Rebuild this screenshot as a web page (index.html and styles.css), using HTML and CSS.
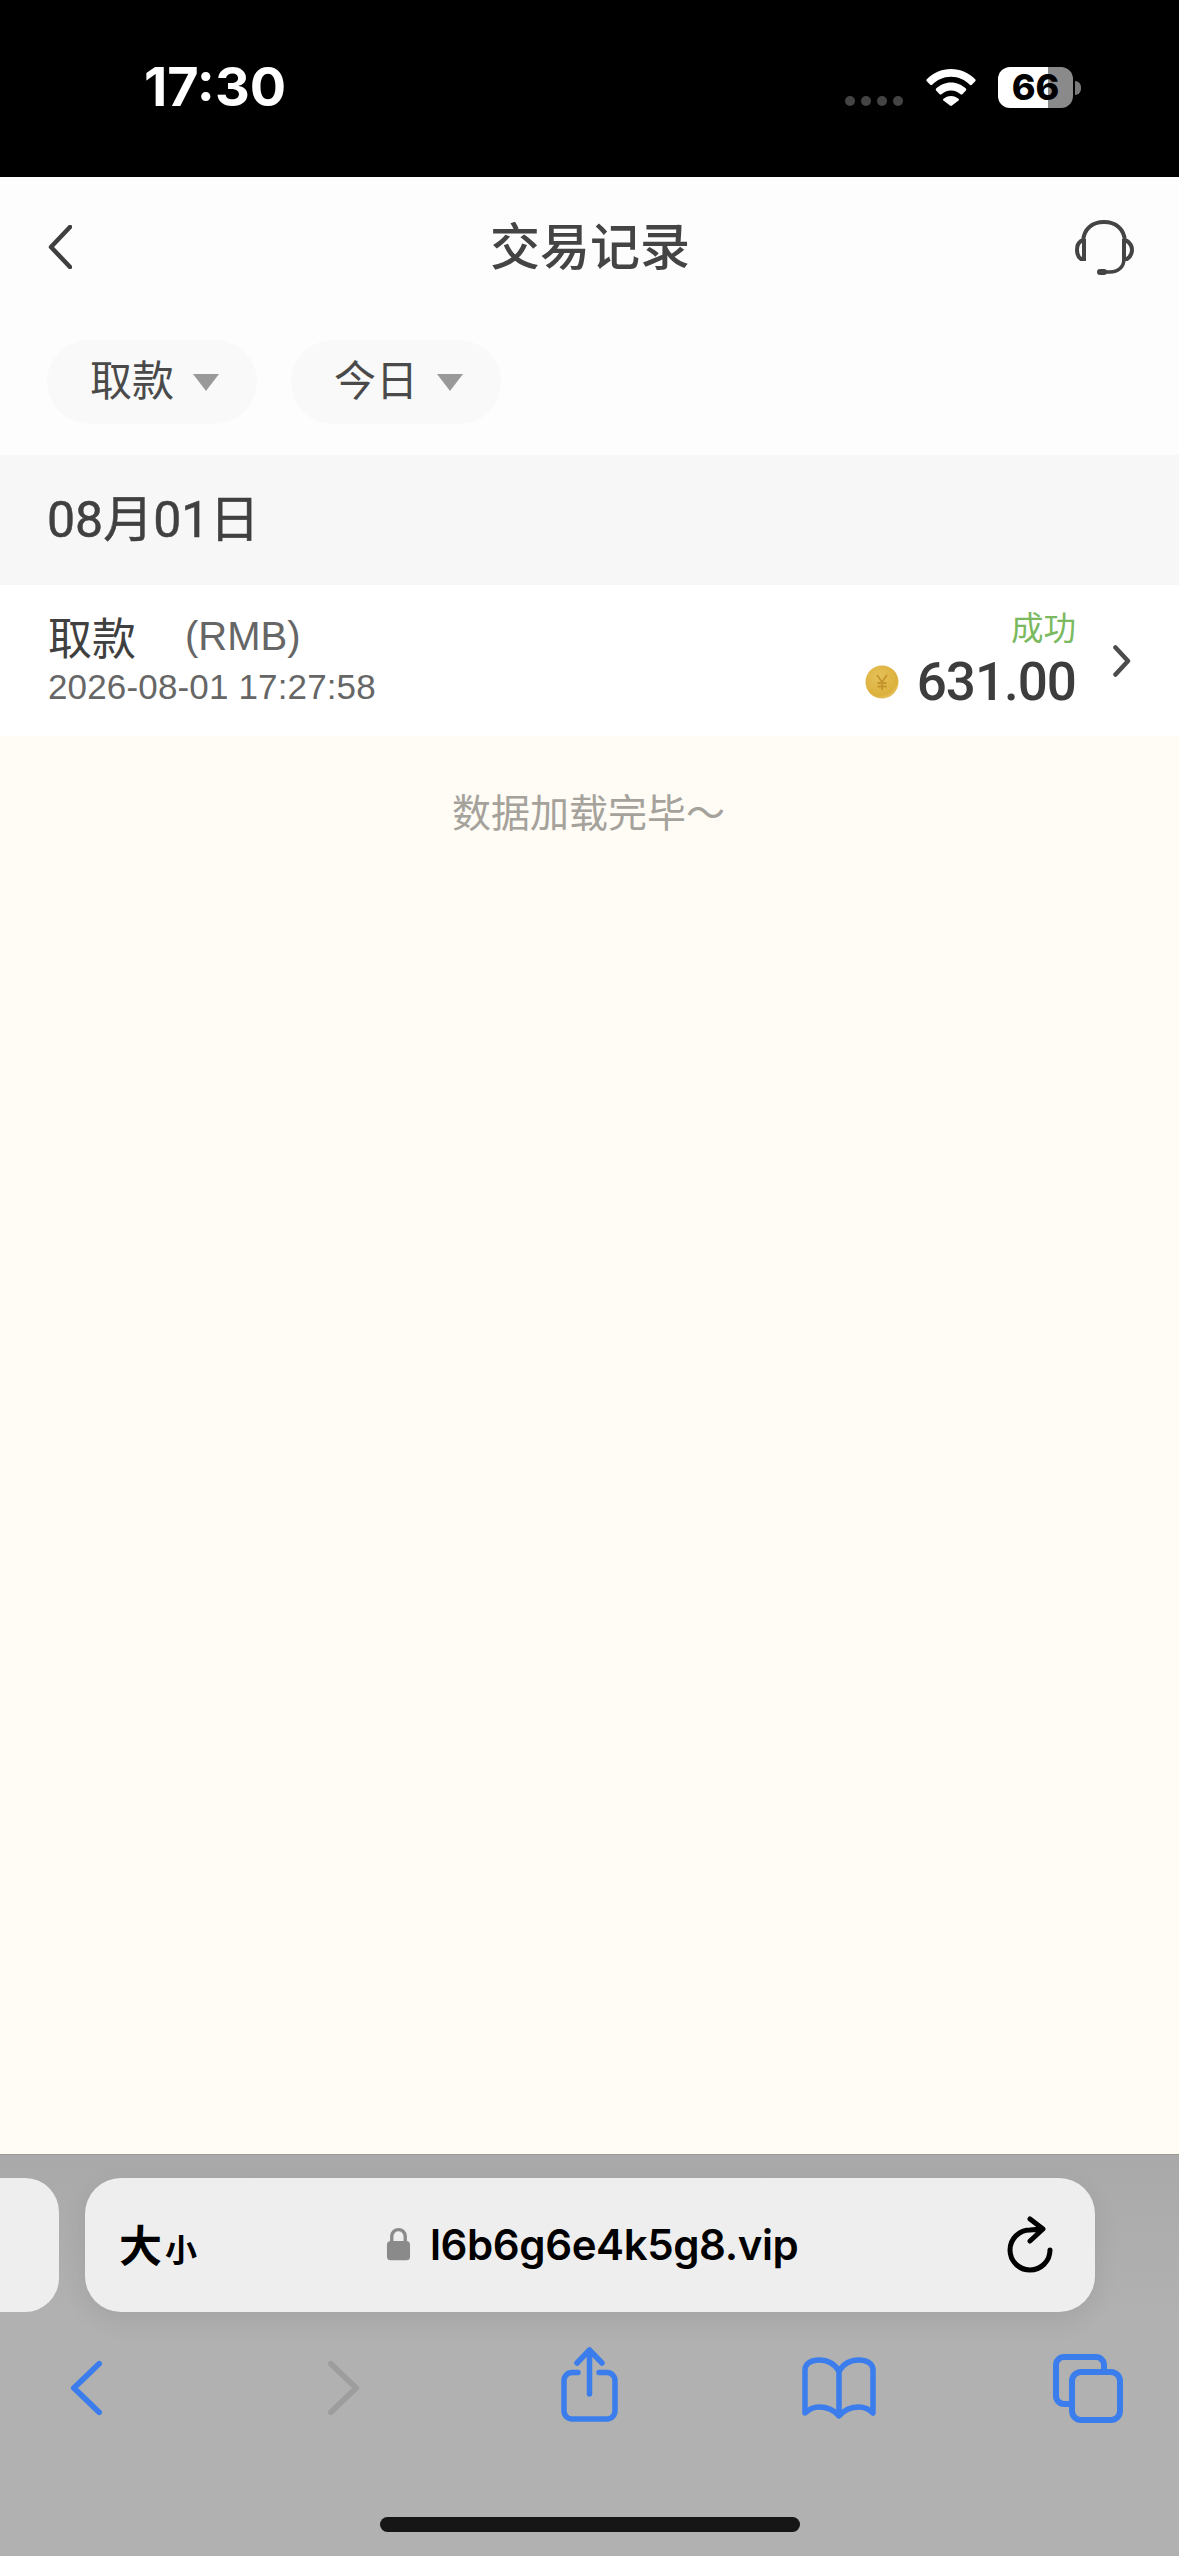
FILE: index.html
```html
<!DOCTYPE html>
<html lang="zh">
<head>
<meta charset="utf-8">
<title>交易记录</title>
<link rel="stylesheet" href="styles.css">
</head>
<body>
<div class="phone">
  <div class="status">
    <span class="time">17:30</span>
    <div class="status-right">
      <div class="dots"><i></i><i></i><i></i><i></i></div>
      <svg class="wifi" viewBox="0 0 50 37"><path d="M25 0C15.500 0 7 3.800 .8 10.200c-.6.600-.6 1.400 0 2l3.400 3.600c.6.600 1.400.6 2 0C11 10.800 17.600 7.800 25 7.800s14 3 18.800 8c.6.600 1.400.6 2 0l3.400-3.600c.6-.6.6-1.400 0-2C43 3.800 34.500 0 25 0zM25 13.400c-5.800 0-11.100 2.400-14.900 6.200-.5.600-.5 1.300 0 1.900l3.500 3.700c.6.600 1.300.5 1.900 0 2.500-2.300 5.800-3.700 9.500-3.700s7 1.400 9.500 3.700c.6.500 1.300.6 1.900 0l3.500-3.700c.5-.6.500-1.300 0-1.900C36.100 15.800 30.800 13.400 25 13.400zM25 27c-2.900 0-5.500 1.100-7.500 2.800-.6.500-.6 1.200-.1 1.800l6.600 5c.6.500 1.400.5 2 0l6.600-5c.5-.6.500-1.300-.1-1.800-2-1.700-4.600-2.800-7.500-2.800z" fill="#fff"/></svg>
      <div class="battery"><div class="battery-body"><span>66</span></div><i class="battery-nub"></i></div>
    </div>
  </div>

  <header class="nav">
    <svg class="nav-back" viewBox="0 0 24 44"><path d="M22 2 3 22l19 20" fill="none" stroke="#3f3f3f" stroke-width="4.500" stroke-linecap="round" stroke-linejoin="round"/></svg>
    <h1 class="nav-title">交易记录</h1>
    <svg class="nav-help" viewBox="0 0 60 56"><g fill="none" stroke="#444" stroke-width="4" stroke-linecap="round"><path d="M9 21C10 9 18 2 30 2s20 7 21 19"/><path d="M10 21H7c-3 2-4 5-4 9s1 7 4 9h3z"/><path d="M50 21h3c3 2 5 5 5 9s-2 7-5 9h-3z"/><path d="M50 39c0 8-6 13-14 13h-9" stroke-width="3.500"/></g><rect x="23" y="49" width="10" height="6" rx="3" fill="#444"/></svg>
  </header>

  <div class="filters">
    <button class="chip">取款<i class="caret"></i></button>
    <button class="chip">今日<i class="caret"></i></button>
  </div>

  <div class="date-head">08月01日</div>

  <div class="record">
    <div class="record-left">
      <div class="record-type"><span class="record-name">取款</span><span class="record-cur">(RMB)</span></div>
      <div class="record-time">2026-08-01 17:27:58</div>
    </div>
    <div class="record-right">
      <div class="record-state">成功</div>
      <div class="record-amount">
        <svg class="coin" viewBox="0 0 34 34"><defs><radialGradient id="g" cx=".4" cy=".35" r=".8"><stop offset="0" stop-color="#e6c25a"/><stop offset=".7" stop-color="#dcb03c"/><stop offset="1" stop-color="#f0d98a"/></radialGradient></defs><circle cx="17" cy="17" r="16.500" fill="url(#g)"/><path d="M12 10l5 7 5-7M17 17v8M12.500 18h9M12.500 21.500h9" fill="none" stroke="#c4932b" stroke-width="1.800"/></svg>
        <span class="amount">631.00</span>
      </div>
    </div>
    <svg class="record-arrow" viewBox="0 0 18 32"><path d="M2.500 2.500 15 16 2.500 29.500" fill="none" stroke="#4c4c4c" stroke-width="4.500" stroke-linecap="round" stroke-linejoin="round"/></svg>
  </div>

  <main class="content"><p class="end-note">数据加载完毕～</p></main>

  <div class="browser">
    <div class="tabs-row">
      <div class="peek"></div>
      <div class="urlbar">
        <span class="aa"><b>大</b><small>小</small></span>
        <div class="url">
          <svg class="lock" viewBox="0 0 26 34"><path d="M6 15V9a7 7 0 0 1 14 0v6" fill="none" stroke="#8a8a8a" stroke-width="3.500"/><rect x="1" y="14" width="24" height="20" rx="4" fill="#8a8a8a"/></svg>
          <span class="url-text">l6b6g6e4k5g8.vip</span>
        </div>
        <svg class="reload" viewBox="0 0 60 65"><path d="M49 38A20 20 0 1 1 29 18L41 17M29 7 42 17 29 29" fill="none" stroke="#000" stroke-width="5" stroke-linecap="round" stroke-linejoin="round"/></svg>
      </div>
    </div>
    <nav class="tools">
      <svg class="tool tool-back" viewBox="0 0 34 56"><path d="M30 3 4 28l26 25" fill="none" stroke="#3b7ded" stroke-width="6" stroke-linecap="round" stroke-linejoin="round"/></svg>
      <svg class="tool tool-fwd" viewBox="0 0 34 56"><path d="M4 3l26 25L4 53" fill="none" stroke="#9d9d9d" stroke-width="6" stroke-linecap="round" stroke-linejoin="round"/></svg>
      <svg class="tool tool-share" viewBox="0 0 60 76"><g fill="none" stroke="#3b7ded" stroke-width="5.500" stroke-linecap="round" stroke-linejoin="round"><path d="M18 25.500H12a8 8 0 0 0-8 8V64a8 8 0 0 0 8 8h35a8 8 0 0 0 8-8V33.500a8 8 0 0 0-8-8h-8"/><path d="M29.500 47V3M17 16 29.500 3 42 16"/></g></svg>
      <svg class="tool tool-book" viewBox="0 0 74 62"><g fill="none" stroke="#3b7ded" stroke-width="5.500" stroke-linejoin="round" stroke-linecap="round"><path d="M37 14C32 6 24 3 17 3 10 3 3 6 3 13v43c4-4 9-6 14-6 8 0 15 3 20 9 5-6 12-9 20-9 5 0 10 2 14 6V13c0-7-7-10-14-10-7 0-15 3-20 11z"/><path d="M37 14v44"/></g></svg>
      <svg class="tool tool-tabs" viewBox="0 0 72 72"><g fill="none" stroke="#3b7ded" stroke-width="6" stroke-linejoin="round"><path d="M52 17v-5a8 8 0 0 0-8-8H12a8 8 0 0 0-8 8v31a8 8 0 0 0 8 8h6"/><rect x="20" y="19" width="48" height="48" rx="9"/></g></svg>
    </nav>
    <div class="home"></div>
  </div>
</div>
</body>
</html>
```
FILE: styles.css
```css
* { box-sizing: border-box; margin: 0; padding: 0; }
html, body { width: 1179px; height: 2556px; overflow: hidden; }
body { font-family: "Inter", "Noto Sans CJK SC", sans-serif; background: #000; }
.phone { width: 1179px; height: 2556px; display: flex; flex-direction: column; }

.status { height: 177px; flex: none; background: #000; color: #fff; display: flex; justify-content: space-between; padding: 58px 98px 0 144px; }
.time { font: 700 54px/58px "Inter", sans-serif; letter-spacing: 0; }
.status-right { display: flex; align-items: flex-start; }
.dots { display: flex; gap: 6px; margin: 38px 23px 0 0; }
.dots i { width: 10px; height: 10px; border-radius: 50%; background: #444; }
.wifi { width: 50px; height: 37px; margin: 11px 22px 0 0; }
.battery { display: flex; align-items: center; margin-top: 9px; }
.battery-body { width: 75px; height: 41px; border-radius: 12px; background: linear-gradient(90deg, #fff 0 50px, #8a8a8a 50px); display: flex; align-items: center; justify-content: center; }
.battery-body span { font: 800 36px/41px "Inter", sans-serif; color: #000; }
.battery-nub { width: 6px; height: 14px; margin-left: 2px; border-radius: 0 7px 7px 0; background: #7a7a7a; }

.nav { height: 144px; flex: none; background: #fdfdfd; display: grid; grid-template-columns: 1fr auto 1fr; align-items: center; padding: 0 45px 0 46px; }
.nav-back { width: 24px; height: 44px; margin: 0 0 4px 2px; justify-self: start; }
.nav-title { font: 500 50px/60px "Noto Sans CJK SC", sans-serif; color: #444; margin-bottom: 12px; }
.nav-help { width: 60px; height: 56px; margin-bottom: 2px; justify-self: end; }

.filters { height: 134px; flex: none; background: #fdfdfd; display: flex; gap: 34px; padding: 19px 0 0 47px; }
.chip { width: 210px; height: 84px; border: 0; border-radius: 42px; background: #f9f9f9; color: #4a4a4a; font: 400 42px/74px "Noto Sans CJK SC", sans-serif; display: flex; align-items: flex-start; padding: 1px 0 0 43px; }
.caret { width: 0; height: 0; margin: 33px 0 0 19px; border-left: 13px solid transparent; border-right: 13px solid transparent; border-top: 17px solid #999; }

.date-head { height: 130px; flex: none; background: #f7f7f7; color: #404040; font: 400 50px/130px "Roboto", "Noto Sans CJK SC", sans-serif; -webkit-text-stroke: .5px #404040; padding-left: 47px; }

.record { height: 151px; flex: none; background: #fff; display: flex; align-items: center; padding: 0 48px 0 48px; }
.record-left { flex: 1; display: flex; flex-direction: column; padding-bottom: 9px; }
.record-type { display: flex; align-items: center; height: 60px; }
.record-name { font: 400 44px/60px "Noto Sans CJK SC", sans-serif; color: #404040; }
.record-cur { font: 400 40px/60px "Liberation Sans", sans-serif; color: #666; margin-left: 49px; }
.record-time { font: 400 35px/40px "Liberation Sans", sans-serif; color: #666; margin-top: 1px; letter-spacing: .15px; }
.record-right { display: flex; flex-direction: column; align-items: flex-end; margin-bottom: 5px; }
.record-state { font: 400 32.500px/42px "Noto Sans CJK SC", sans-serif; color: #7ab95e; }
.record-amount { display: flex; align-items: center; gap: 18px; height: 60px; margin-top: 5px; }
.coin { width: 34px; height: 34px; }
.amount { font: 500 53px/60px "Roboto", sans-serif; color: #3d3d3d; letter-spacing: -1px; }
.record-arrow { width: 18px; height: 32px; margin: 0 0 0 37px; }

.content { flex: 1; background: #fffcf5; text-align: center; padding-top: 50px; }
.end-note { font: 400 39px/48px "Noto Sans CJK SC", sans-serif; color: #a5a29c; margin-left: -2px; }

.browser { height: 402px; flex: none; background: linear-gradient(#a9a9a9, #b1b1b1 40%); border-top: 1px solid #9d9a96; position: relative; }
.tabs-row { display: flex; gap: 26px; padding-top: 23px; height: 158px; }
.peek { width: 59px; height: 134px; flex: none; background: #eee; border-radius: 0 34px 34px 0; }
.urlbar { width: 1010px; height: 134px; flex: none; background: #eee; border-radius: 36px; display: flex; align-items: center; padding: 0 34px 0 34px; box-shadow: 0 8px 26px rgba(0,0,0,.08); }
.aa { width: 84px; font-family: "Noto Sans CJK SC", sans-serif; color: #000; display: flex; align-items: baseline; }
.aa b { font-size: 43px; font-weight: 700; line-height: 50px; }
.aa small { font-size: 32px; font-weight: 700; line-height: 50px; margin-left: 3px; }
.url { flex: 1; display: flex; align-items: center; padding-left: 183px; }
.lock { width: 25px; height: 34px; margin-top: -2px; }
.url-text { font: 600 42px/54px "Inter", sans-serif; color: #000; margin-left: 19px; letter-spacing: -.4px; }
.reload { width: 60px; height: 65px; margin-top: -2px; }

.tools { display: flex; align-items: flex-start; height: 76px; margin-top: 34px; padding-left: 70px; }
.tool { flex: none; }
.tool-back { width: 33px; height: 56px; margin-top: 13px; }
.tool-fwd { width: 33px; height: 56px; margin: 13px 0 0 224px; }
.tool-share { width: 60px; height: 76px; margin-left: 200px; }
.tool-book { width: 74px; height: 62px; margin: 10px 0 0 182px; }
.tool-tabs { width: 72px; height: 72px; margin: 6px 0 0 176px; }
.home { position: absolute; left: 380px; top: 362px; width: 420px; height: 15px; border-radius: 8px; background: #161616; }
```
